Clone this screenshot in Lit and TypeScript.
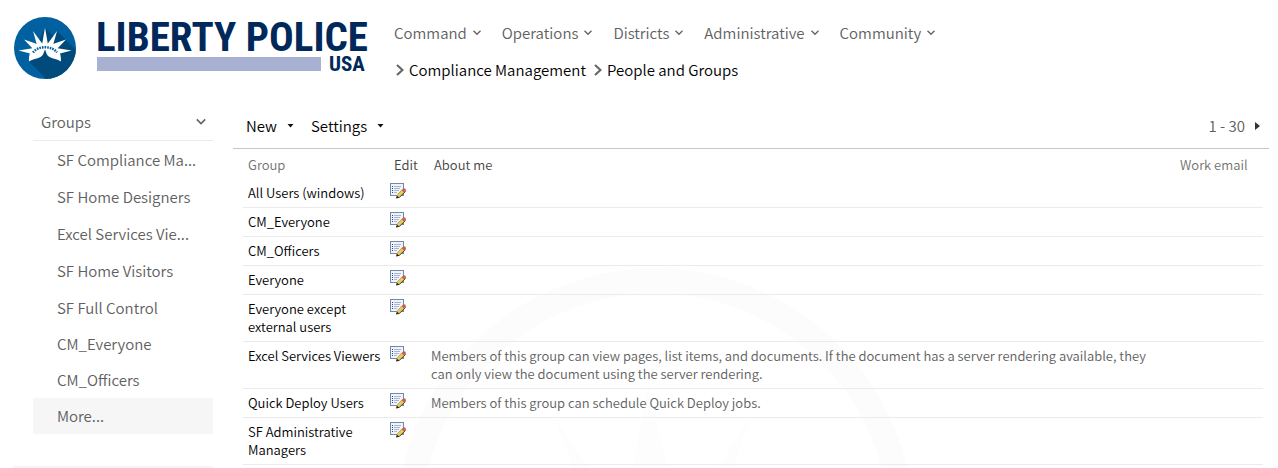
import { LitElement, html, css, svg } from "lit";
import { customElement } from "lit/decorators.js";

interface Group {
  name: string;
  about?: string;
}

const MENU = ["Command", "Operations", "Districts", "Administrative", "Community"];
const TRAIL = ["Compliance Management", "People and Groups"];
const RECENT = ["SF Compliance Ma...", "SF Home Designers", "Excel Services Vie...", "SF Home Visitors"];
const OTHERS = ["SF Full Control", "CM_Everyone", "CM_Officers"];
const GROUPS: Group[] = [
  { name: "All Users (windows)" },
  { name: "CM_Everyone" },
  { name: "CM_Officers" },
  { name: "Everyone" },
  { name: "Everyone except external users" },
  {
    name: "Excel Services Viewers",
    about:
      "Members of this group can view pages, list items, and documents. If the document has a server rendering available, they can only view the document using the server rendering.",
  },
  { name: "Quick Deploy Users", about: "Members of this group can schedule Quick Deploy jobs." },
  { name: "SF Administrative Managers" },
];

const chevronDown = (size: number) => html`<svg
  class="icon"
  width=${size}
  height=${size}
  viewBox="0 0 10 10"
  aria-hidden="true"
>
  <path d="M1.5 2.8 5 6.3 8.5 2.8" fill="none" stroke="#666" stroke-width="1.4" />
</svg>`;

const crumbArrow = html`<svg class="icon" width="10" height="12" viewBox="0 0 10 12" aria-hidden="true">
  <path d="M3 1 8.500 6 3 11" fill="none" stroke="#666" stroke-width="2.200" />
</svg>`;

const caret = html`<svg class="icon" width="7" height="4" viewBox="0 0 7 4" aria-hidden="true">
  <path d="M0.500 0h6L3.500 3.500z" fill="#111" />
</svg>`;

const editIcon = html`<svg class="icon" width="16" height="16" viewBox="0 0 16 16" aria-hidden="true">
  <rect x="0.500" y="0.500" width="13" height="12" fill="#eef3fc" stroke="#7489a6" />
  <g shape-rendering="crispEdges">
    <path d="M2 3h1v1H2zM2 5h1v1H2zM2 7h1v1H2zM2 9h1v1H2z" fill="#2f4a7a" />
    <path d="M4 3h7v1H4zM4 5h6v1H4zM4 7h5v1H4zM4 9h3v1H4z" fill="#a9b6cd" />
  </g>
  <path d="M6.500 15 7.300 11.800 13 6 15.400 8.400 9.600 14.200z" fill="#e9cb58" />
  <path d="M6.800 14.900 9.600 14.200 15.600 8.400" fill="none" stroke="#4a3f24" stroke-width="1" />
  <path d="M7.300 11.800 12.400 6.500" fill="none" stroke="#a08c4c" stroke-width="0.700" />
  <path d="M11.600 7.200 13.600 5.300Q16 5 16 7.600L14 9.600z" fill="#c95f55" />
  <path d="M6 15.500 6.800 12.600 9 14.600z" fill="#222" />
</svg>`;

const rays = svg`
  <path d="M45 27.500 48 45H42z" />
  <path d="M33 31 42.500 44 37.500 47z" />
  <path d="M57 31 52.500 47 47.500 44z" />
  <path d="M24 39.500 38.500 44.500 34 50z" />
  <path d="M66 39.500 56 50 51.500 44.500z" />
  <path d="M18.500 50.500 34 48 32 54z" />
  <path d="M71.500 50.500 58 54 56 48z" />
  <path d="M29 61.500C28.500 48 36 43.500 45 43.500S61.500 48 61 61.500C57.500 59 53 59 49.500 57 46.500 55.500 46 51.500 45 49.500 44 51.500 43.500 55.500 40.500 57 37 59 32.500 59 29 61.500z" />
`;

@customElement("app-root")
export class AppRoot extends LitElement {
  static styles = css`
    :host {
      display: block;
      position: relative;
      overflow: hidden;
      min-height: 100vh;
      box-sizing: border-box;
      background: #fff;
      color: #606060;
      font: 350 15px/20px "Noto Sans CJK SC", "Noto Sans", sans-serif;
    }
    a {
      color: inherit;
      text-decoration: none;
    }
    ul {
      list-style: none;
      margin: 0;
      padding: 0;
    }
    button {
      display: inline-flex;
      align-items: center;
      padding: 0;
      border: 0;
      background: none;
      color: inherit;
      font: inherit;
    }
    .icon {
      display: block;
      flex: none;
    }
    .clip {
      position: absolute;
      inset: 0;
      overflow: hidden;
    }
    .watermark {
      position: absolute;
      top: 268px;
      left: calc(50% - 244px);
      width: 520px;
      height: 520px;
    }
    .header {
      position: relative;
      display: grid;
      grid-template-columns: 394px 1fr;
      height: 104px;
    }
    .menu,
    .trail {
      display: flex;
    }
    .menu {
      padding-top: 23px;
      gap: 20px;
    }
    .menu button {
      gap: 5px;
    }
    .trail {
      padding-top: 17px;
      gap: 6px;
      color: #000;
    }
    .trail a {
      display: flex;
      align-items: center;
      gap: 5px;
    }
    .brand {
      font-family: "Roboto Condensed", "Liberation Sans Narrow", Roboto, sans-serif;
      font-weight: 700;
      fill: #00285a;
    }
    .title {
      font-size: 41px;
    }
    .country {
      font-size: 21px;
    }
    .body {
      position: relative;
      display: grid;
      grid-template-columns: 213px minmax(0, 1fr);
      column-gap: 20px;
      padding-right: 9px;
    }
    .side {
      padding-left: 33px;
    }
    .side-title {
      display: flex;
      justify-content: space-between;
      width: 100%;
      height: 37px;
      padding: 0 6px 0 8px;
      border-bottom: 1px solid #ebebeb;
    }
    .links a {
      display: block;
      height: 36px;
      padding-left: 24px;
      line-height: 36px;
      white-space: nowrap;
    }
    .recent {
      display: grid;
      gap: 1px;
      padding: 1px 0;
    }
    .links .more {
      background: #f6f6f6;
    }
    .side-end {
      height: 2px;
      margin: 32px 0 0 -20px;
      background: #f4f4f4;
    }
    .toolbar {
      display: flex;
      align-items: center;
      gap: 17px;
      height: 44px;
      padding: 0 9px 0 13px;
      border-bottom: 1px solid #c6c6c6;
      color: #000;
    }
    .toolbar button {
      gap: 10px;
    }
    .pager {
      display: flex;
      align-items: center;
      gap: 10px;
      margin-left: auto;
      color: #606060;
    }
    table {
      width: calc(100% - 16px);
      margin-left: 10px;
      table-layout: fixed;
      border-collapse: collapse;
      font-size: 13px;
      line-height: 18px;
    }
    .c-name {
      width: 143px;
    }
    .c-edit {
      width: 40px;
    }
    .c-mail {
      width: 88px;
    }
    th {
      padding: 7px 5px 5px;
      font-weight: 350;
      text-align: left;
      color: #717171;
    }
    th.dark {
      padding-left: 8px;
      color: #444;
    }
    td {
      padding: 5px;
      border-bottom: 1px solid #ebebeb;
      vertical-align: top;
    }
    td.name {
      padding-right: 0;
      color: #000;
    }
    td.about {
      padding-right: 20px;
    }
    td.edit {
      padding: 4px 4px 0;
    }
  `;

  render() {
    return html`
      <div class="clip">
        <svg class="watermark" viewBox="0 0 520 520" aria-hidden="true">
          <circle cx="260" cy="260" r="247" fill="none" stroke="#fcfcfc" stroke-width="25" />
          <path
            d="M253 115 285 260H228zM160 150 232 260 205 270zM355 150 315 270 284 260z"
            fill="#fdfdfd"
          />
        </svg>
      </div>
      <header class="header">
        <a href="#" aria-label="Liberty Police USA">
          <svg class="icon" width="394" height="96" viewBox="0 0 394 96">
            <defs>
              <clipPath id="disc"><circle cx="45" cy="48" r="31" /></clipPath>
            </defs>
            <circle cx="45" cy="48" r="31" fill="#0060a0" />
            <path
              clip-path="url(#disc)"
              d="M45 27.500 55 38 57 31 90 64V90H57L29 61.500z"
              fill="#004b7c"
            />
            <g fill="#fff">${rays}</g>
            <path
              d="M33 52.500C38 45.500 52 45.500 57 52.500"
              fill="none"
              stroke="#0060a0"
              stroke-width="2.400"
              stroke-dasharray="1.600 1"
            />
            <rect x="97" y="57" width="224" height="14" fill="#a9b1d3" />
            <text class="brand title" x="96" y="51">LIBERTY POLICE</text>
            <text class="brand country" x="329" y="71">USA</text>
          </svg>
        </a>
        <div>
          <nav class="menu" aria-label="Main">
            ${MENU.map((m) => html`<button type="button">${m}${chevronDown(10)}</button>`)}
          </nav>
          <nav class="trail" aria-label="Breadcrumb">
            ${TRAIL.map((t) => html`<a href="#">${crumbArrow}${t}</a>`)}
          </nav>
        </div>
      </header>
      <div class="body">
        <nav class="side" aria-label="Groups">
          <button class="side-title" type="button">Groups${chevronDown(12)}</button>
          <ul class="links recent">
            ${RECENT.map((g) => html`<li><a href="#">${g}</a></li>`)}
          </ul>
          <ul class="links">
            ${OTHERS.map((g) => html`<li><a href="#">${g}</a></li>`)}
            <li><a class="more" href="#">More...</a></li>
          </ul>
          <div class="side-end"></div>
        </nav>
        <main>
          <div class="toolbar">
            <button type="button">New${caret}</button>
            <button type="button">Settings${caret}</button>
            <span class="pager">
              1 - 30
              <button type="button" aria-label="Next page">
                <svg class="icon" width="5" height="8" viewBox="0 0 5 8"><path d="M0 0v8l5-4z" fill="#333" /></svg>
              </button>
            </span>
          </div>
          <table>
            <colgroup>
              <col class="c-name" />
              <col class="c-edit" />
              <col />
              <col class="c-mail" />
            </colgroup>
            <thead>
              <tr>
                <th scope="col">Group</th>
                <th class="dark" scope="col">Edit</th>
                <th class="dark" scope="col">About me</th>
                <th scope="col">Work email</th>
              </tr>
            </thead>
            <tbody>
              ${GROUPS.map(
                (g) => html`<tr>
                  <td class="name"><a href="#">${g.name}</a></td>
                  <td class="edit"><button type="button" aria-label="Edit ${g.name}">${editIcon}</button></td>
                  <td class="about">${g.about ?? ""}</td>
                  <td></td>
                </tr>`
              )}
            </tbody>
          </table>
        </main>
      </div>
    `;
  }
}
